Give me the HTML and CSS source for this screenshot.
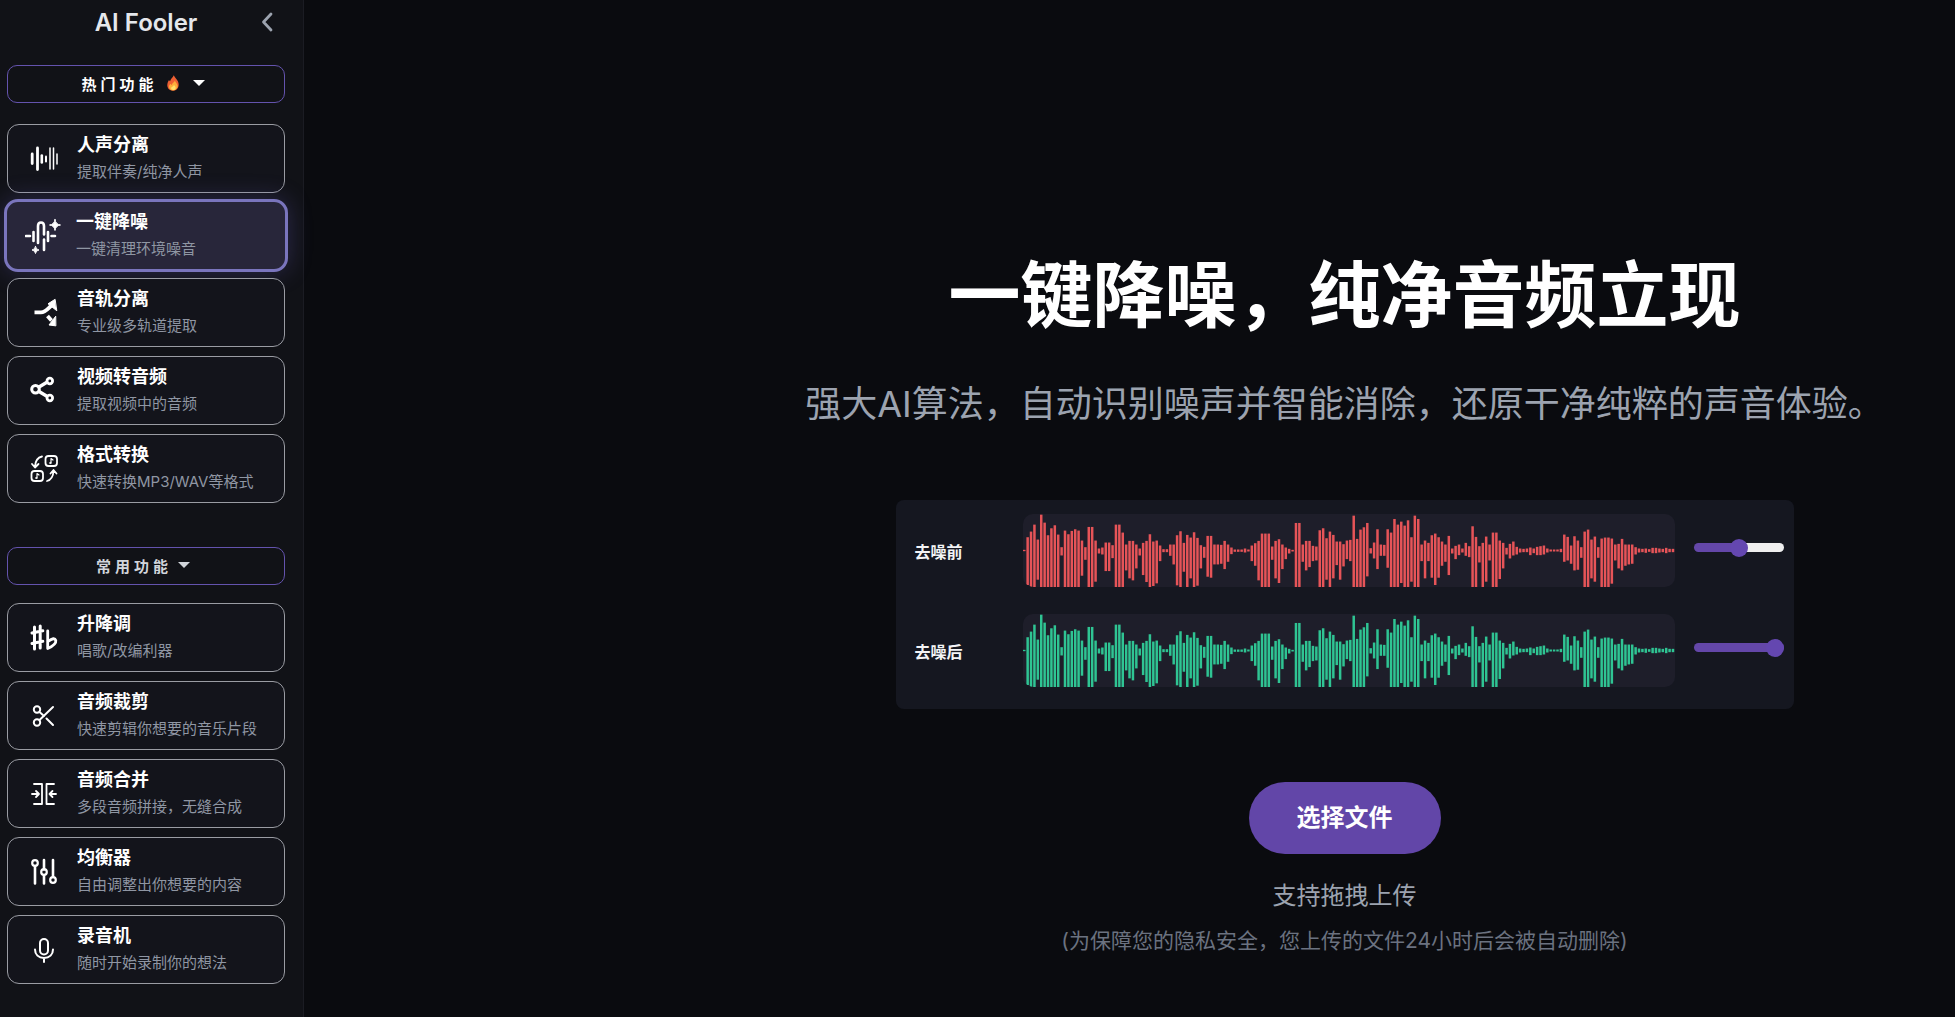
FILE: index.html
```html
<!DOCTYPE html>
<html lang="zh-CN">
<head>
    <meta charset="UTF-8">
    <meta name="viewport" content="width=device-width, initial-scale=1.0">
    <title>AI Fooler</title>
    <link rel="stylesheet" href="styles.css">
</head>
<body>
    <aside class="sidebar">
        <header class="brand">
            <h2>AI Fooler</h2>
            <button type="button" class="collapse" aria-label="收起">
                <svg width="12" height="20" viewBox="0 0 12 20"><path d="M10 2L2.500 10L10 18" fill="none" stroke="currentColor" stroke-width="2.800" stroke-linecap="round" stroke-linejoin="round"/></svg>
            </button>
        </header>

        <button type="button" class="group-toggle hot">
            <span>热门功能</span>
            <svg class="fire" width="14" height="16" viewBox="0 0 14 16">
                <path d="M7.800 0.300C8.600 2.600 10.800 3.800 12 6.600C12.800 8.600 12.900 10.300 12.300 12C11.500 14.400 9.500 15.800 7 15.800C3.600 15.800 1.500 13.700 1.300 10.600C1.200 8.300 2 6.800 3 5C3.300 5.700 3.700 6.100 4.100 6.300C4.500 4 6.700 2.700 7.800 0.300Z" fill="#ee5f33"/>
                <path d="M9 5.500C9.200 7.500 11 8.200 11.500 10.300C12 13.200 9.800 15.300 7.200 15.400C4.600 15.400 2.800 13.600 3 11.200C3.200 9.900 4 9.600 4.500 8.700C4.900 9.300 5.200 9.700 5.700 9.900C6 8.200 8.300 7.500 9 5.500Z" fill="#fdae3b"/>
                <path d="M8 10C9 11.200 9.900 12 9.600 13.400C9.200 14.600 8.200 15 7.200 15C6 15 5 14.200 5.100 13C5.300 11.900 7.200 11.600 8 10Z" fill="#ffe06a"/>
            </svg>
            <span class="caret"></span>
        </button>
        <nav class="cards">
            <a class="card" href="#vocal">
                <svg class="icon" viewBox="0 0 36 36"><path d="M24 7V28M27.500 7V28M31 13V23" stroke-width="1.500"/><path d="M11.500 7V28.500M6.200 13V22.500" stroke-width="2.800"/><path d="M15.800 14.500V21.500" stroke-width="2.600"/><path d="M20 15.500V20.500" stroke-width="2"/></svg>
                <span class="card-text"><strong>人声分离</strong><small>提取伴奏/纯净人声</small></span>
            </a>
            <a class="card active" href="#denoise">
                <svg class="icon" viewBox="0 0 36 36"><path d="M1 18H5M8.500 14V23M13 25V8Q13 4.500 16 4.500Q19 4.500 19 8V16.500M19 21.500V32M23 14V23M26.500 18H30" stroke-width="2.600"/><path class="solid" d="M30 1.500Q30.600 6.400 35.500 7Q30.600 7.600 30 12.500Q29.400 7.600 24.500 7Q29.400 6.400 30 1.500ZM10.500 28.500Q10.900 31.600 14 32Q10.900 32.400 10.500 35.500Q10.100 32.400 7 32Q10.100 31.600 10.500 28.500Z" stroke-width="1"/></svg>
                <span class="card-text"><strong>一键降噪</strong><small>一键清理环境噪音</small></span>
            </a>
            <a class="card" href="#tracks">
                <svg class="icon" viewBox="0 0 36 36"><path d="M8.500 17.300H15C19.500 17.300 21.500 14 25.500 10.500M21.500 21L25.500 25.500" stroke-width="3.800" stroke-linecap="butt"/><path class="solid" d="M28.800 4.500L22 8.800L30.500 15.500ZM29.500 21.500L23 30L29.500 30.800Z" stroke-width="1"/></svg>
                <span class="card-text"><strong>音轨分离</strong><small>专业级多轨道提取</small></span>
            </a>
            <a class="card" href="#video">
                <svg class="icon" viewBox="0 0 36 36"><path d="M13 14L20.500 9.500M13 18.500L20.500 23" stroke-width="3.400"/><circle cx="9.500" cy="16.300" r="3.800" stroke-width="3"/><circle cx="23.800" cy="8" r="2.800" stroke-width="2.800"/><circle cx="23.800" cy="25" r="2.800" stroke-width="2.800"/></svg>
                <span class="card-text"><strong>视频转音频</strong><small>提取视频中的音频</small></span>
            </a>
            <a class="card" href="#format">
                <svg class="icon" viewBox="0 0 36 36"><rect x="19.500" y="5" width="11.500" height="10" rx="3" stroke-width="1.800"/><rect x="5.500" y="20" width="11.500" height="10" rx="3" stroke-width="1.800"/><path d="M25 12V7.500L27 9M11 27V22.500L13 24" stroke-width="1.200"/><circle class="solid" cx="24.200" cy="12" r="0.600" stroke-width="1"/><circle class="solid" cx="10.200" cy="27" r="0.600" stroke-width="1"/><path d="M16 5.500Q9.500 7 9 15.500M6 13L9 16.500L12.500 13M21 30Q27 28.500 27.500 20M24.500 22.500L27.500 19L30.500 22.500" stroke-width="1.800"/></svg>
                <span class="card-text"><strong>格式转换</strong><small>快速转换MP3/WAV等格式</small></span>
            </a>
        </nav>

        <button type="button" class="group-toggle common">
            <span>常用功能</span>
            <span class="caret"></span>
        </button>
        <nav class="cards">
            <a class="card" href="#pitch">
                <svg class="icon" viewBox="0 0 36 36"><path d="M8.500 7V29M14.200 6V28M6 13L16.800 10.800M6 23.500L16.800 21.300" stroke-width="3"/><path d="M21.700 11V28.500Q30.500 24.500 29.800 20.500Q28.500 16.500 22 21.500" stroke-width="2.800"/></svg>
                <span class="card-text"><strong>升降调</strong><small>唱歌/改编利器</small></span>
            </a>
            <a class="card" href="#cut">
                <svg class="icon" viewBox="0 0 36 36"><circle cx="11" cy="11.500" r="3.200" stroke-width="2"/><circle cx="11" cy="24.500" r="3.200" stroke-width="2"/><path d="M13.500 22L27 9M13.500 14L18 18M20.500 20.500L27 27" stroke-width="2"/></svg>
                <span class="card-text"><strong>音频裁剪</strong><small>快速剪辑你想要的音乐片段</small></span>
            </a>
            <a class="card" href="#merge">
                <svg class="icon" viewBox="0 0 36 36"><path d="M8 8H16V28H8M28 8H20.500V28H28M6 18H13M10 15L13 18L10 21M30 18H23.500M26.500 15L23.500 18L26.500 21" stroke-width="1.800"/></svg>
                <span class="card-text"><strong>音频合并</strong><small>多段音频拼接，无缝合成</small></span>
            </a>
            <a class="card" href="#eq">
                <svg class="icon" viewBox="0 0 36 36"><path d="M9 12V29.500M18 6V15.500M18 21.500V29.500M27 6V23" stroke-width="2.600"/><circle cx="9" cy="9" r="2.800" stroke-width="2.200"/><circle cx="18" cy="18" r="2.800" stroke-width="2.200"/><circle cx="27" cy="26" r="2.800" stroke-width="2.200"/></svg>
                <span class="card-text"><strong>均衡器</strong><small>自由调整出你想要的内容</small></span>
            </a>
            <a class="card" href="#record">
                <svg class="icon" viewBox="0 0 36 36"><rect x="14" y="7" width="8" height="15.500" rx="4" stroke-width="2"/><path d="M9 17.500C9 22.500 12.500 26 18 26S27 22.500 27 17.500M18 26V30" stroke-width="2"/></svg>
                <span class="card-text"><strong>录音机</strong><small>随时开始录制你的想法</small></span>
            </a>
        </nav>
    </aside>

    <main class="content">
        <h1>一键降噪，纯净音频立现</h1>
        <p class="lead">强大AI算法，自动识别噪声并智能消除，还原干净纯粹的声音体验。</p>

        <section class="compare">
            <div class="track">
                <label for="before">去噪前</label>
                <svg class="wave before" viewBox="0 0 1958 220" preserveAspectRatio="none"></svg>
                <input type="range" id="before" class="half" min="0" max="100" value="50">
            </div>
            <div class="track">
                <label for="after">去噪后</label>
                <svg class="wave after" viewBox="0 0 1958 220" preserveAspectRatio="none"></svg>
                <input type="range" id="after" min="0" max="100" value="100">
            </div>
        </section>

        <button type="button" class="upload">选择文件</button>
        <p class="drag">支持拖拽上传</p>
        <p class="privacy">(为保障您的隐私安全，您上传的文件24小时后会被自动删除)</p>
    </main>

    <script src="script.js"></script>
</body>
</html>
```

FILE: styles.css
```css
* {
    box-sizing: border-box;
}
body {
    margin: 0;
    min-height: 100vh;
    display: flex;
    background-color: #0a0b0f;
    color: #fff;
    font-family: Inter, "Noto Sans CJK SC", sans-serif;
}
button {
    font-family: inherit;
    cursor: pointer;
}

/* Sidebar */
.sidebar {
    flex: none;
    width: 304px;
    padding: 0 18px 0 7px;
    background-color: #111217;
    border-right: 1px solid #1b1c23;
}
.brand {
    display: flex;
    align-items: center;
    justify-content: center;
    height: 44px;
    margin-bottom: 21px;
    position: relative;
}
.brand h2 {
    margin: 0;
    font-size: 24px;
    font-weight: 600;
    color: #e5e7eb;
}
.collapse {
    position: absolute;
    right: 12px;
    display: flex;
    padding: 0;
    border: none;
    background: none;
    color: #9ca3af;
}
.group-toggle {
    display: flex;
    align-items: center;
    justify-content: center;
    width: 100%;
    height: 38px;
    padding: 0 6px 2px 0;
    border: 1px solid #6453ae;
    border-radius: 10px;
    background: none;
    color: #fff;
    font-size: 15px;
    font-weight: 700;
    letter-spacing: 4px;
}
.hot {
    margin-bottom: 21px;
}
.common {
    margin: 44px 0 18px;
    color: #d1d5db;
}
.fire {
    margin: 0 13px 0 8px;
}
.caret {
    border: 6px solid transparent;
    border-top-color: currentColor;
    border-bottom: none;
}
.common .caret {
    margin-left: 6px;
}
.cards {
    display: flex;
    flex-direction: column;
    gap: 9px;
}
.card {
    display: flex;
    align-items: center;
    gap: 15px;
    height: 69px;
    padding-left: 18px;
    border: 1px solid #9a9ca3;
    border-radius: 12px;
    background-color: #13141b;
    color: #fff;
    text-decoration: none;
}
.card.active {
    height: 73px;
    margin: -3px;
    border: 3px solid #7a75bd;
    border-radius: 14px;
    background-color: #28263a;
    box-shadow: 0 0 24px rgba(108, 99, 200, 0.3);
}
.icon {
    flex: none;
    width: 36px;
    height: 36px;
    fill: none;
    stroke: #fff;
    stroke-linecap: round;
    stroke-linejoin: round;
}
.solid {
    fill: #fff;
}
.card-text {
    display: flex;
    flex-direction: column;
}
.card-text strong {
    font-size: 18px;
    line-height: 26px;
    font-weight: 700;
}
.card-text small {
    font-size: 15px;
    line-height: 28px;
    color: #8f96a3;
}

/* Main area */
.content {
    flex: 1;
    display: flex;
    flex-direction: column;
    align-items: center;
    justify-content: center;
    padding: 190px 0 0 430px;
}
h1 {
    margin: 0 0 37px;
    font-size: 72px;
    line-height: 90px;
    font-weight: 700;
}
.lead {
    margin: 0 0 69px;
    font-size: 36px;
    line-height: 54px;
    color: #9ca3af;
}
.compare {
    display: flex;
    flex-direction: column;
    gap: 27px;
    width: 100%;
    max-width: 898px;
    padding: 14px 10px 22px 19px;
    border-radius: 8px;
    background-color: #151720;
}
.track {
    display: flex;
    align-items: center;
}
.track label {
    width: 108px;
    font-size: 16px;
    font-weight: 700;
    color: #f3f4f6;
}
.wave {
    flex: 1;
    min-width: 0;
    height: 73px;
    margin-right: 19px;
    border-radius: 10px;
    background-color: #1e1e2a;
}
.before {
    fill: #e65458;
}
.after {
    fill: #2fc493;
}
input[type="range"] {
    -webkit-appearance: none;
    appearance: none;
    width: 90px;
    height: 9px;
    margin: 0 0 6px;
    border-radius: 5px;
    background: #6447a9;
}
input.half {
    background: linear-gradient(to right, #6447a9 50%, #efefef 50%);
}
input[type="range"]::-webkit-slider-thumb {
    -webkit-appearance: none;
    width: 18px;
    height: 18px;
    border-radius: 50%;
    background: #6447b0;
}
.upload {
    margin-top: 73px;
    padding: 18px 48px;
    border: none;
    border-radius: 36px;
    background-color: #6246a8;
    color: #fff;
    font-size: 24px;
    line-height: 36px;
    font-weight: 700;
}
.drag {
    margin: 24px 0 0;
    font-size: 24px;
    line-height: 36px;
    color: #9ca3af;
}
.privacy {
    margin: 11px 0 0;
    font-size: 21px;
    line-height: 32px;
    color: #6b7280;
}
```

FILE: script.js
```js
// [above, below] the centre line for each bar
const bars = [
    [2,2],[40,104],[57,110],[78,110],[33,88],[108,110],[84,110],[46,110],[67,110],[76,110],[48,110],[10,15],
    [60,110],[49,110],[59,110],[64,110],[60,110],[30,76],[10,28],[71,110],[71,110],[30,94],[6,9],[9,12],
    [24,62],[24,62],[16,23],[78,110],[78,110],[54,110],[18,60],[29,84],[29,90],[18,54],[6,15],[23,74],
    [29,95],[49,110],[27,107],[30,99],[15,32],[4,5],[4,5],[18,16],[18,42],[46,105],[58,110],[23,64],
    [47,110],[39,84],[55,110],[38,106],[16,54],[11,22],[44,79],[44,82],[18,42],[18,42],[17,40],[29,56],
    [18,34],[9,11],[3,4],[3,4],[3,4],[6,6],[3,3],[15,32],[22,46],[29,90],[51,110],[51,110],
    [51,110],[12,28],[29,84],[34,98],[18,56],[9,26],[5,9],[2,3],[83,110],[83,110],[18,34],[29,60],
    [29,50],[14,32],[12,30],[61,110],[67,110],[37,88],[57,110],[47,84],[27,44],[27,88],[19,48],[30,26],
    [32,32],[105,110],[35,110],[63,110],[70,110],[83,78],[7,9],[24,24],[64,56],[18,16],[17,16],[64,52],
    [54,110],[95,110],[78,110],[87,98],[75,110],[91,110],[40,94],[105,110],[95,110],[18,32],[30,84],[23,32],
    [46,82],[51,104],[40,82],[27,46],[18,34],[44,74],[6,9],[14,26],[18,14],[6,6],[23,16],[13,20],
    [73,110],[41,110],[13,36],[23,110],[42,94],[18,30],[54,110],[54,110],[30,86],[23,54],[8,12],[20,24],
    [27,15],[11,12],[6,6],[5,5],[6,5],[9,14],[6,8],[11,14],[13,14],[15,12],[6,6],[3,3],
    [3,3],[3,3],[5,5],[48,34],[41,30],[15,40],[43,60],[30,58],[10,22],[57,110],[63,110],[33,84],
    [42,94],[10,22],[36,110],[39,110],[39,110],[36,100],[18,30],[20,54],[35,60],[18,46],[18,42],[18,40],
    [10,12],[6,6],[5,5],[6,7],[4,4],[8,8],[8,8],[6,6],[5,5],[8,8],[5,5],[5,5]
];

document.querySelectorAll('.wave').forEach(function(wave) {
    bars.forEach(function(bar, i) {
        const rect = document.createElementNS('http://www.w3.org/2000/svg', 'rect');
        rect.setAttribute('x', i * 10.2);
        rect.setAttribute('y', 110 - bar[0]);
        rect.setAttribute('width', 7.5);
        rect.setAttribute('height', bar[0] + bar[1]);
        wave.appendChild(rect);
    });
});
```
